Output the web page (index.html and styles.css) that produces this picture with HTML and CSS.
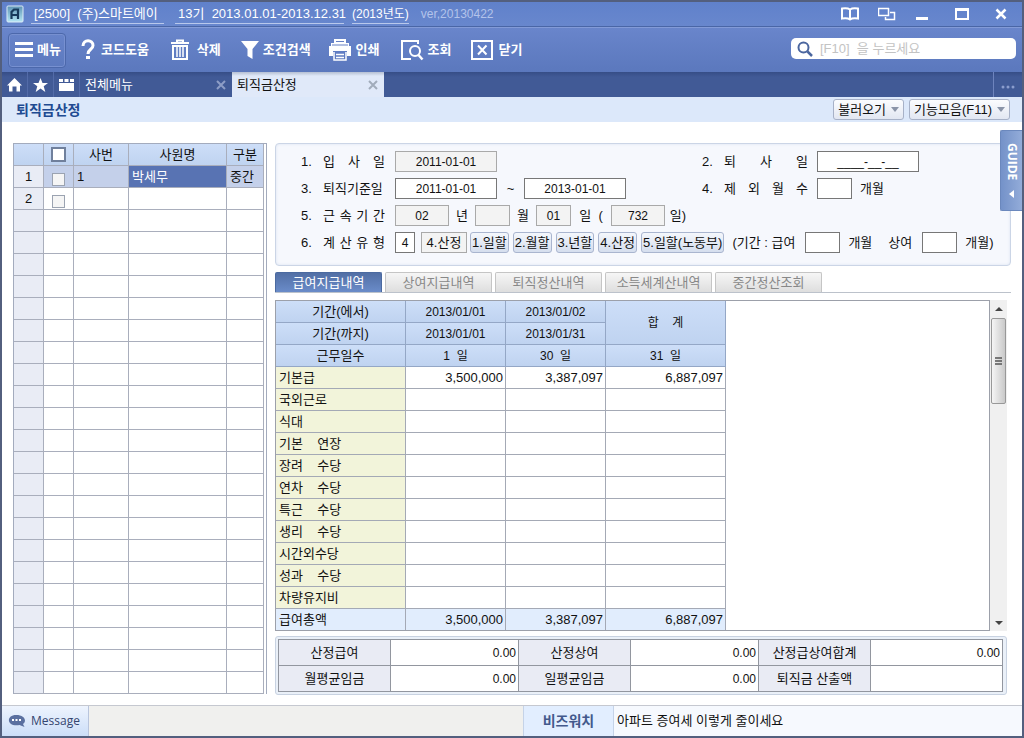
FILE: index.html
```html
<!DOCTYPE html>
<html lang="ko">
<head>
<meta charset="utf-8">
<title>퇴직금산정</title>
<link rel="stylesheet" href="styles.css">
</head>
<body>
<div class="app">
  <header class="titlebar">
    <svg class="logo" width="18" height="18" viewBox="0 0 18 18"><defs><linearGradient id="lg" x1="0" y1="0" x2="0" y2="1"><stop offset="0" stop-color="#5e93b4"/><stop offset="1" stop-color="#b4e6f4"/></linearGradient></defs><rect x="1" y="1" width="16" height="16" rx="1" fill="url(#lg)" stroke="#dcebf7" stroke-width="1"/><path d="M5.500 14V7L8 4.500H12V14M5.500 10H12" fill="none" stroke="#173a5b" stroke-width="2.200"/></svg>
    <span class="company">[2500]&nbsp; (주)스마트에이</span>
    <span class="period">13기&nbsp; 2013.01.01-2013.12.31</span>
    <span class="year">(2013년도)</span>
    <span class="version">ver,20130422</span>
    <div class="window-controls">
      <button class="win" aria-label="도움말"><svg width="18" height="14" viewBox="0 0 18 14"><path d="M9 2.500C7 1 4 1 1 1.500V11.500C4 11 7 11 9 12.500C11 11 14 11 17 11.500V1.500C14 1 11 1 9 2.500V13" fill="none" stroke="#fff" stroke-width="2"/></svg></button>
      <button class="win" aria-label="창 전환"><svg width="18" height="14" viewBox="0 0 18 14"><path d="M0 1.500H11M.5 1V8.500H10.500V1" fill="none" stroke="#fff" stroke-width="1.500"/><path d="M12 5.500H16.500V12.500H7.500V10" fill="none" stroke="#fff" stroke-width="1.500"/></svg></button>
      <button class="win spaced" aria-label="최소화"><svg width="14" height="14" viewBox="0 0 14 14"><path d="M1 11.500H13" stroke="#fff" stroke-width="3"/></svg></button>
      <button class="win spaced" aria-label="최대화"><svg width="14" height="14" viewBox="0 0 14 14"><path d="M0 2.500H14" stroke="#fff" stroke-width="3"/><path d="M1 1V12M13 1V12M0 12H14" fill="none" stroke="#fff" stroke-width="2"/></svg></button>
      <button class="win" aria-label="창 닫기"><svg width="12" height="14" viewBox="0 0 12 14"><path d="M1.500 2.500L10.500 11.500M10.500 2.500L1.500 11.500" stroke="#fff" stroke-width="2.500"/></svg></button>
    </div>
  </header>

  <div class="toolbar">
    <button class="tool menu"><svg width="18" height="18" viewBox="0 0 18 18"><path d="M0 2.500H18M0 8.500H18M0 14.500H18" stroke="#fff" stroke-width="3"/></svg>메뉴</button>
    <button class="tool help"><svg width="14" height="22" viewBox="0 0 14 22"><path d="M2 7C2 0 12 0 12 6.500C12 10.500 7 10 7 15" fill="none" stroke="#fff" stroke-width="3"/><rect x="5" y="17" width="4" height="3" fill="#fff"/></svg>코드도움</button>
    <button class="tool delete"><svg width="18" height="22" viewBox="0 0 18 22"><path d="M0 4H18M6 3V1.500H12V3" fill="none" stroke="#fff" stroke-width="2"/><path d="M2 6V20H16V6" fill="none" stroke="#fff" stroke-width="2"/><path d="M6 8V18M9 8V18M12 8V18" fill="none" stroke="#fff" stroke-width="1.500"/><path d="M1 7H17" stroke="#fff" stroke-width="2"/></svg>삭제</button>
    <button class="tool filter"><svg width="18" height="20" viewBox="0 0 18 20"><path d="M0 1H18L11.500 9V19L6.500 16V9Z" fill="#fff"/></svg>조건검색</button>
    <button class="tool print"><svg width="22" height="22" viewBox="0 0 22 22"><path d="M5 0H17V5H5ZM0 7H22V17H18V12H4V17H0Z" fill="#fff"/><path d="M2 4H20V8H2Z" fill="#fff"/><path d="M7 2.500H15" stroke="#6680c4"/><path d="M5 13V21H17V13M7 15.500H15M7 18.500H15" fill="none" stroke="#fff" stroke-width="1.500"/><path d="M3 6H19" stroke="#6680c4"/></svg>인쇄</button>
    <button class="tool view"><svg width="24" height="22" viewBox="0 0 24 22"><path d="M18 5V2H2V20H11" fill="none" stroke="#fff" stroke-width="2"/><circle cx="15" cy="12" r="5" fill="none" stroke="#fff" stroke-width="2"/><path d="M18.500 16L22.500 20.500" stroke="#fff" stroke-width="2.500"/></svg>조회</button>
    <button class="tool close"><svg width="22" height="20" viewBox="0 0 22 20"><rect x="1" y="1" width="20" height="18" fill="none" stroke="#fff" stroke-width="2"/><path d="M7 5.500L15.500 14.500M15.500 5.500L7 14.500" stroke="#fff" stroke-width="2"/></svg>닫기</button>
    <label class="search"><svg width="16" height="16" viewBox="0 0 16 16"><circle cx="6.500" cy="6.500" r="5" fill="none" stroke="#4b669f" stroke-width="2"/><path d="M10.500 10.500L15 15" stroke="#4b669f" stroke-width="2.500"/></svg><input type="text" placeholder="[F10]  을 누르세요" aria-label="검색"></label>
  </div>

  <nav class="tabs">
    <button class="icon-tab" aria-label="홈"><svg width="15" height="14" viewBox="0 0 15 14"><path d="M7.500 0L15 7.500H13V13.500H9.500V8.500H5.500V13.500H2V7.500H0Z" fill="#fff"/></svg></button>
    <button class="icon-tab" aria-label="즐겨찾기"><svg width="15" height="14" viewBox="0 0 15 14"><path d="M7.500 0L9.500 5H15L10.700 8.300L12.300 14L7.500 10.600L2.700 14L4.300 8.300L0 5H5.500Z" fill="#fff"/></svg></button>
    <button class="icon-tab" aria-label="최근메뉴"><svg width="15" height="14" viewBox="0 0 15 14"><path d="M0 1H4V4H0ZM5.500 1H9.500V4H5.500ZM11 1H15V4H11ZM0 5H15V13H0Z" fill="#fff"/></svg></button>
    <div class="tab"><a href="#all">전체메뉴</a><button class="tab-x" aria-label="탭 닫기"><svg width="10" height="10" viewBox="0 0 10 10"><path d="M1 1L9 9M9 1L1 9" stroke="#8d9dc6" stroke-width="2"/></svg></button></div>
    <div class="tab active"><a href="#retire">퇴직금산정</a><button class="tab-x" aria-label="탭 닫기"><svg width="10" height="10" viewBox="0 0 10 10"><path d="M1 1L9 9M9 1L1 9" stroke="#a1acbb" stroke-width="2"/></svg></button></div>
    <button class="more" aria-label="더보기"><svg width="14" height="4" viewBox="0 0 14 4"><circle cx="2" cy="2" r="1.500" fill="#8b9dcd"/><circle cx="7" cy="2" r="1.500" fill="#8b9dcd"/><circle cx="12" cy="2" r="1.500" fill="#8b9dcd"/></svg></button>
  </nav>

  <div class="page-head">
    <h1>퇴직금산정</h1>
    <button class="drop">불러오기<i></i></button>
    <button class="drop">기능모음(F11)<i></i></button>
  </div>

  <main class="content">
    <section class="people">
      <table>
        <colgroup><col class="p-no"><col class="p-no"><col class="p-code"><col><col class="p-kind"></colgroup>
        <thead><tr><th></th><th><input type="checkbox" aria-label="전체 선택"></th><th>사번</th><th>사원명</th><th>구분</th></tr></thead>
        <tbody>
          <tr class="selected"><th>1</th><td class="check"><input type="checkbox" aria-label="1 선택"></td><td>1</td><td class="current">박세무</td><td>중간</td></tr>
          <tr><th>2</th><td class="check"><input type="checkbox" aria-label="2 선택"></td><td></td><td></td><td></td></tr>
          <tr><th></th><td></td><td></td><td></td><td></td></tr>
          <tr><th></th><td></td><td></td><td></td><td></td></tr>
          <tr><th></th><td></td><td></td><td></td><td></td></tr>
          <tr><th></th><td></td><td></td><td></td><td></td></tr>
          <tr><th></th><td></td><td></td><td></td><td></td></tr>
          <tr><th></th><td></td><td></td><td></td><td></td></tr>
          <tr><th></th><td></td><td></td><td></td><td></td></tr>
          <tr><th></th><td></td><td></td><td></td><td></td></tr>
          <tr><th></th><td></td><td></td><td></td><td></td></tr>
          <tr><th></th><td></td><td></td><td></td><td></td></tr>
          <tr><th></th><td></td><td></td><td></td><td></td></tr>
          <tr><th></th><td></td><td></td><td></td><td></td></tr>
          <tr><th></th><td></td><td></td><td></td><td></td></tr>
          <tr><th></th><td></td><td></td><td></td><td></td></tr>
          <tr><th></th><td></td><td></td><td></td><td></td></tr>
          <tr><th></th><td></td><td></td><td></td><td></td></tr>
          <tr><th></th><td></td><td></td><td></td><td></td></tr>
          <tr><th></th><td></td><td></td><td></td><td></td></tr>
          <tr><th></th><td></td><td></td><td></td><td></td></tr>
          <tr><th></th><td></td><td></td><td></td><td></td></tr>
          <tr><th></th><td></td><td></td><td></td><td></td></tr>
          <tr><th></th><td></td><td></td><td></td><td></td></tr>
        </tbody>
      </table>
    </section>

    <div class="detail">
      <form class="panel">
        <div class="row two">
          <div class="field"><span class="n">1.</span><label class="name" for="f1">입 사 일</label><input id="f1" class="date" value="2011-01-01" readonly></div>
          <div class="field"><span class="n">2.</span><label class="name wide" for="f2">퇴 사 일</label><input id="f2" class="date" value="____-__-__"></div>
        </div>
        <div class="row two">
          <div class="field"><span class="n">3.</span><label class="name" for="f3">퇴직기준일</label><input id="f3" class="date" value="2011-01-01"><span class="tilde">~</span><input class="date" value="2013-01-01" aria-label="기준일 종료"></div>
          <div class="field"><span class="n">4.</span><label class="name wide" for="f4">제 외 월 수</label><input id="f4" class="short"><span class="unit">개월</span></div>
        </div>
        <div class="row">
          <span class="n">5.</span><label class="name" for="f5">근 속 기 간</label><input id="f5" class="mid" value="02" readonly><span class="between">년</span><input class="short" readonly aria-label="월"><span class="between">월</span><input class="short" value="01" readonly aria-label="일"><span class="between paren">일&nbsp; (</span><input class="mid" value="732" readonly aria-label="총 일수"><span class="between">일)</span>
        </div>
        <div class="row">
          <span class="n">6.</span><label class="name" for="f6">계 산 유 형</label><input id="f6" class="tiny" value="4"><output class="type">4.산정</output>
          <span class="choices"><button type="button">1.일할</button><button type="button">2.월할</button><button type="button">3.년할</button><button type="button">4.산정</button><button type="button">5.일할(노동부)</button></span>
          <label class="unit term" for="f7">(기간 : 급여</label><input id="f7" class="short"><span class="unit">개월</span><label class="unit bonus" for="f8">상여</label><input id="f8" class="short"><span class="unit">개월)</span>
        </div>
      </form>

      <div class="subtabs">
        <button class="on">급여지급내역</button><button>상여지급내역</button><button>퇴직정산내역</button><button>소득세계산내역</button><button>중간정산조회</button>
      </div>

      <div class="pay">
        <div class="pay-grid">
          <table>
            <colgroup><col class="g-name"><col class="g-col"><col class="g-col"><col class="g-sum"></colgroup>
            <thead>
              <tr><th>기간(에서)</th><th>2013/01/01</th><th>2013/01/02</th><th rowspan="2">합&nbsp;&nbsp;&nbsp; 계</th></tr>
              <tr><th>기간(까지)</th><th>2013/01/01</th><th>2013/01/31</th></tr>
              <tr><th>근무일수</th><th>1&nbsp; 일</th><th>30&nbsp; 일</th><th>31&nbsp; 일</th></tr>
            </thead>
            <tbody>
              <tr><th>기본급</th><td>3,500,000</td><td>3,387,097</td><td>6,887,097</td></tr>
              <tr><th>국외근로</th><td></td><td></td><td></td></tr>
              <tr><th>식대</th><td></td><td></td><td></td></tr>
              <tr><th>기본&nbsp;&nbsp;&nbsp; 연장</th><td></td><td></td><td></td></tr>
              <tr><th>장려&nbsp;&nbsp;&nbsp; 수당</th><td></td><td></td><td></td></tr>
              <tr><th>연차&nbsp;&nbsp;&nbsp; 수당</th><td></td><td></td><td></td></tr>
              <tr><th>특근&nbsp;&nbsp;&nbsp; 수당</th><td></td><td></td><td></td></tr>
              <tr><th>생리&nbsp;&nbsp;&nbsp; 수당</th><td></td><td></td><td></td></tr>
              <tr><th>시간외수당</th><td></td><td></td><td></td></tr>
              <tr><th>성과&nbsp;&nbsp;&nbsp; 수당</th><td></td><td></td><td></td></tr>
              <tr><th>차량유지비</th><td></td><td></td><td></td></tr>
            </tbody>
            <tfoot><tr><th>급여총액</th><td>3,500,000</td><td>3,387,097</td><td>6,887,097</td></tr></tfoot>
          </table>
        </div>
        <div class="scroll" aria-hidden="true">
          <svg width="8" height="4" viewBox="0 0 8 4"><path d="M0 4L4 0L8 4Z" fill="#444"/></svg>
          <div class="thumb"><svg width="7" height="9" viewBox="0 0 7 9"><path d="M0 1H7M0 4H7M0 7H7" stroke="#555" stroke-width="1.500"/></svg></div>
          <svg class="down" width="8" height="4" viewBox="0 0 8 4"><path d="M0 0L4 4L8 0Z" fill="#444"/></svg>
        </div>
      </div>

      <div class="summary">
        <table>
          <colgroup><col class="s-name"><col class="s-value"><col class="s-name"><col class="s-value"><col class="s-name"><col></colgroup>
          <tr><th>산정급여</th><td>0.00</td><th>산정상여</th><td>0.00</td><th>산정급상여합계</th><td>0.00</td></tr>
          <tr><th>월평균임금</th><td>0.00</td><th>일평균임금</th><td>0.00</td><th>퇴직금 산출액</th><td></td></tr>
        </table>
      </div>
    </div>
    <button class="guide">GUIDE<svg width="6" height="8" viewBox="0 0 6 8"><path d="M5 0V8L0 4Z" fill="#fff"/></svg></button>
  </main>

  <footer class="status">
    <button class="message"><svg width="18" height="14" viewBox="0 0 18 14"><path d="M8 1C17 1 19 7 15 10L16.500 13L11.500 11C-2 13-2 1 8 1Z" fill="#5b70a0"/><path d="M4 5H6V7H4ZM7.500 5H9.500V7H7.500ZM11 5H13V7H11Z" fill="#fff"/></svg>Message</button>
    <strong>비즈워치</strong>
    <a href="#news">아파트 증여세 이렇게 줄이세요</a>
  </footer>
</div>
</body>
</html>
```

FILE: styles.css
```css
* { box-sizing: border-box; }
body {
  margin: 0;
  font: 13px/16px "Liberation Sans", "Noto Sans CJK KR", sans-serif;
  color: #111;
}
button, input, output { font: inherit; color: inherit; }
button { padding: 0; border: 0; background: none; white-space: nowrap; }
a { color: inherit; text-decoration: none; }
svg { display: block; flex: none; }
table { width: 100%; border-spacing: 0; table-layout: fixed; }
th { font-weight: normal; }
th, td { padding: 0; white-space: nowrap; }

.app {
  display: flex;
  flex-direction: column;
  min-height: 100vh;
  border: 2px solid #535f7e;
  background: #fff;
}

/* title bar */
.titlebar {
  display: flex;
  align-items: center;
  height: 25px;
  padding: 0 14px 0 4px;
  background: linear-gradient(#6081cb, #6887cd);
  border-bottom: 1px solid #4a66a6;
  color: #fff;
  white-space: nowrap;
}
.company { margin-left: 7px; padding: 2px 4px 1px 3px; border-bottom: 1px solid #b9c8eb; width: 133px; }
.period { margin-left: 11px; padding: 2px 0 1px 3px; border-bottom: 1px solid #b9c8eb; width: 169px; }
.year { margin-left: 8px; padding: 2px 0 1px; border-bottom: 1px solid #b9c8eb; font-size: 12px; }
.version { margin-left: 12px; color: #b3c3ea; font-size: 12px; }
.window-controls { display: flex; align-items: center; gap: 19px; margin-left: auto; padding-right: 1px; }
.win { display: block; }
.win.spaced { margin-right: 7px; }

/* toolbar */
.toolbar {
  display: flex;
  align-items: center;
  height: 45px;
  padding: 0 6px;
  border-top: 1px solid #839bd7;
  background: linear-gradient(#6985cb, #5b78bd);
  color: #fff;
}
.tool { display: flex; align-items: center; gap: 6px; font-weight: bold; }
.menu {
  height: 35px;
  width: 58px;
  padding-left: 6px;
  gap: 4px;
  border: 1px solid #4c68ab;
  border-radius: 4px;
  box-shadow: inset 0 0 0 1px #7790d0;
}
.help { margin-left: 15px; }
.delete { margin-left: 22px; }
.delete { gap: 8px; }
.filter { margin-left: 20px; gap: 4px; }
.print { margin-left: 18px; gap: 5px; }
.view { margin-left: 20px; gap: 4px; }
.close { margin-left: 20px; gap: 5px; }
.search {
  display: flex;
  align-items: center;
  gap: 7px;
  width: 225px;
  height: 21px;
  margin: 0 0 3px auto;
  padding: 0 6px;
  border-radius: 5px;
  background: #fff;
}
.search input { flex: 1; min-width: 0; padding: 0; border: 0; outline: 0; background: none; }
.search input::placeholder { color: #c3c3c3; opacity: 1; }

/* document tabs */
.tabs {
  display: flex;
  height: 25px;
  background: linear-gradient(#364d86, #415a96 5px);
  color: #fff;
}
.icon-tab {
  display: flex;
  align-items: center;
  justify-content: center;
  width: 26px;
  border-right: 1px solid #536ba8;
}
.tab {
  display: flex;
  align-items: center;
  justify-content: space-between;
  width: 152px;
  padding: 0 6px 0 5px;
}
.tab.active { background: linear-gradient(#b5bfd3, #e0e9f9 4px); color: #111; }
.more { width: 29px; margin-left: auto; padding: 5px 0 0 7px; border-left: 1px solid #6e84bd; }

.page-head {
  display: flex;
  align-items: center;
  gap: 5px;
  height: 25px;
  padding: 0 12px 0 14px;
  background: #dce8fa;
}
h1 { margin: 0 auto 0 0; font: inherit; font-size: 14px; font-weight: bold; color: #204a91; }
.drop {
  display: flex;
  align-items: center;
  gap: 5px;
  height: 21px;
  padding: 0 4px;
  border: 1px solid #a7b1c7;
  border-radius: 3px;
  background: linear-gradient(#fbfcfe, #e2e7f2);
}
.drop i { border: 4px solid transparent; border-top: 5px solid #8a94a8; border-bottom: 0; }

/* work area */
.content {
  position: relative;
  display: flex;
  flex: 1;
  align-items: flex-start;
  gap: 8px;
  padding: 21px 11px 10px 11px;
}
.people {
  flex: none;
  width: 254px;
  padding-right: 2px;
  border: 1px solid #a3abbd;
  border-width: 1px 1px 0 1px;
}
.p-no { width: 30px; }
.p-code { width: 55px; }
.p-kind { width: 37px; }
.people tr { height: 22px; }
.people th, .people td {
  border-right: 1px solid #a9aebc;
  border-bottom: 1px solid #a9aebc;
}
.people thead th, .pay-grid thead th { background: linear-gradient(#cddef8, #bfd3f0); }
.people tbody th { background: #e9ecf5; }
.people td { padding-left: 3px; }
.people td.check, .people thead th { padding: 0; }
.people td.check { text-align: center; vertical-align: bottom; }
.people .selected td { background: #c4d0ea; }
.people .selected td.current { background: #5873b3; color: #fff; }
input[type="checkbox"] {
  appearance: none;
  display: block;
  width: 13px;
  height: 13px;
  margin: 0 auto 1px;
  border: 1px solid #9ba3b1;
  background: #f5f5f5;
}
.people thead input { width: 15px; height: 15px; margin: 0 auto; border: 2px solid #70809c; background: #fff; }

.detail { flex: 1; min-width: 0; }
.panel {
  display: flex;
  flex-direction: column;
  gap: 6px;
  padding: 7px 12px 12px 25px;
  border: 1px solid #cbd5e6;
  border-radius: 4px;
  background: #f6f8fd;
  box-shadow: inset 0 0 3px #d9e2f0;
}
.row, .field { display: flex; align-items: center; white-space: nowrap; }
.two { display: grid; grid-template-columns: 401px 1fr; }
.n { width: 22px; }
.name { width: 62px; margin-right: 10px; text-align-last: justify; }
.name.wide { width: 84px; margin-right: 9px; }
.panel input, .type {
  height: 21px;
  padding: 0;
  border: 1px solid #777;
  border-radius: 0;
  background: #fff;
  text-align: center;
}
.panel input { font-size: 12px; }
.panel input[readonly], .type { border-color: #a9a9a9; background: #f3f3f3; }
.panel .date { width: 102px; }
.panel .mid { width: 54px; }
.panel .short { width: 35px; }
.panel .tiny { width: 20px; }
.tilde, .between { width: 27px; text-align: center; }
.between { width: 26px; }
.paren { width: 40px; }
.type { width: 46px; margin: 0 3px 0 6px; line-height: 19px; }
.choices { display: flex; gap: 4px; }
.choices button {
  height: 21px;
  padding: 0 1px;
  border: 1px solid #a9b5cf;
  border-radius: 3px;
  background: linear-gradient(#f4f7fc, #d5deee);
}
.unit { margin-left: 8px; }
.term { margin-right: 10px; }
.bonus { margin: 0 10px 0 16px; }

.subtabs {
  display: flex;
  gap: 3px;
  margin-top: 6px;
  border-bottom: 1px solid #bcc2cb;
}
.subtabs button {
  width: 107px;
  height: 20px;
  border: 1px solid #c5c5c5;
  border-bottom: 0;
  border-radius: 2px 2px 0 0;
  background: linear-gradient(#f6f6f6, #dedede);
  color: #888;
}
.subtabs .on { border-color: #4b6aa0; background: linear-gradient(#526fa5, #6a8cc9); color: #fff; }

.pay { display: flex; margin: 7px 4px 0 0; }
.pay-grid { flex: 1; border: 1px solid #9ca0aa; }
.pay-grid table { width: 450px; }
.g-name { width: 130px; }
.g-col { width: 100px; }
.g-sum { width: 120px; }
.pay-grid tr { height: 22px; }
.pay-grid th, .pay-grid td {
  border-right: 1px solid #a4a9b5;
  border-bottom: 1px solid #a4a9b5;
}
.pay-grid thead th { border-color: #94a7c6; font-size: 12px; }
.pay-grid thead th:first-child { font-size: 13px; }
.pay-grid tbody th, .pay-grid tfoot th { padding-left: 3px; text-align: left; }
.pay-grid tbody th { background: #f2f4da; }
.pay-grid td { padding-right: 2px; text-align: right; }
.pay-grid tfoot th, .pay-grid tfoot td { background: #e1edfd; border-bottom: 0; }
.pay-grid tfoot tr { height: 21px; }
.scroll {
  display: flex;
  flex-direction: column;
  align-items: center;
  width: 17px;
  padding: 7px 1px 6px;
  background: #f0f0f0;
}
.thumb {
  display: flex;
  align-items: center;
  justify-content: center;
  width: 15px;
  height: 86px;
  margin-top: 7px;
  border: 1px solid #989898;
  border-radius: 2px;
  background: linear-gradient(90deg, #f5f5f5, #c9c9c9);
}
.down { margin-top: auto; }

.summary {
  margin: 5px 4px 0 0;
  padding: 2px 3px 2px 2px;
  border: 1px solid #c8d2e1;
  border-radius: 3px;
  background: #eaf0f8;
}
.summary table { border: 1px solid #92969f; border-width: 1px 0 0 1px; }
.s-name { width: 112px; }
.s-value { width: 128px; }
.summary tr { height: 26px; }
.summary th, .summary td { border: 1px solid #92969f; border-width: 0 1px 1px 0; }
.summary th { background: #e9ebf4; }
.summary td { padding-right: 2px; background: #fff; text-align: right; font-size: 12px; }

.guide {
  position: absolute;
  top: 8px;
  right: 0;
  display: flex;
  align-items: center;
  justify-content: center;
  gap: 9px;
  width: 22px;
  height: 81px;
  border: 1px solid #6b88bd;
  border-right: 0;
  border-radius: 2px 0 0 2px;
  background: linear-gradient(90deg, #7492c9, #93acd9);
  color: #fff;
  font: bold 12px/16px "Open Sans", sans-serif;
  writing-mode: vertical-rl;
}

/* status bar */
.status {
  display: flex;
  height: 31px;
  border-top: 1px solid #c5c8d0;
  background: #f0f0ee;
}
.message {
  display: flex;
  align-items: center;
  gap: 5px;
  width: 87px;
  margin-right: auto;
  padding-left: 6px;
  border-right: 1px solid #b9c5dd;
  background: linear-gradient(#eef4fe, #ccdef8);
  color: #34456f;
  font: 12px/16px "Open Sans", sans-serif;
}
.status strong {
  width: 91px;
  border: 1px solid #c5d3e8;
  border-width: 0 1px;
  background: #e2eeff;
  color: #43598c;
  font-size: 14px;
  line-height: 30px;
  text-align: center;
}
.status a { width: 40%; padding-left: 3px; background: #f6f9fe; line-height: 30px; }
```
